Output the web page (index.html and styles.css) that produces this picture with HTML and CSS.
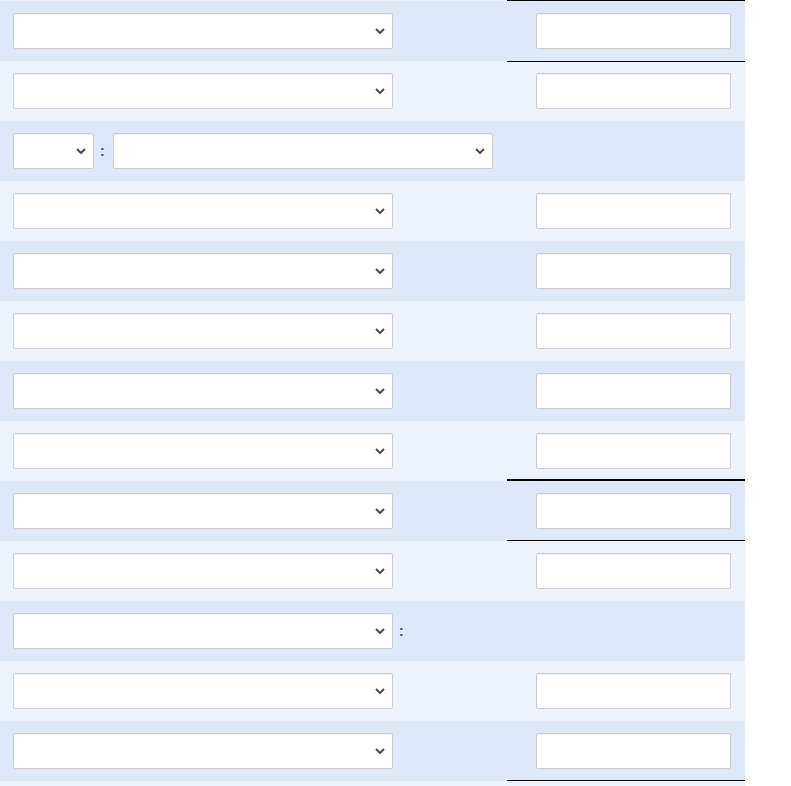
FILE: index.html
```html
<!DOCTYPE html>
<html lang="en">
<head>
<meta charset="utf-8">
<title>Form</title>
<link rel="stylesheet" href="styles.css">
</head>
<body>
<div class="sheet">
  <div class="row dark">
    <div class="c1"><span class="pick"><select class="sel"><option></option></select><svg class="chev" viewBox="0 0 10 6"><path d="M1 1L5 5L9 1"/></svg></span></div>
    <div class="c2"></div>
    <div class="c3 line-above"><input class="inp" type="text"></div>
  </div>
  <div class="row light">
    <div class="c1"><span class="pick"><select class="sel"><option></option></select><svg class="chev" viewBox="0 0 10 6"><path d="M1 1L5 5L9 1"/></svg></span></div>
    <div class="c2"></div>
    <div class="c3 line-top"><input class="inp" type="text"></div>
  </div>
  <div class="row dark">
    <div class="c12">
      <span class="pick"><select class="sel sel-small"><option></option></select><svg class="chev" viewBox="0 0 10 6"><path d="M1 1L5 5L9 1"/></svg></span>
      <span class="colon">:</span>
      <span class="pick"><select class="sel"><option></option></select><svg class="chev" viewBox="0 0 10 6"><path d="M1 1L5 5L9 1"/></svg></span>
    </div>
    <div class="c3"></div>
  </div>
  <div class="row light">
    <div class="c1"><span class="pick"><select class="sel"><option></option></select><svg class="chev" viewBox="0 0 10 6"><path d="M1 1L5 5L9 1"/></svg></span></div>
    <div class="c2"></div>
    <div class="c3"><input class="inp" type="text"></div>
  </div>
  <div class="row dark">
    <div class="c1"><span class="pick"><select class="sel"><option></option></select><svg class="chev" viewBox="0 0 10 6"><path d="M1 1L5 5L9 1"/></svg></span></div>
    <div class="c2"></div>
    <div class="c3"><input class="inp" type="text"></div>
  </div>
  <div class="row light">
    <div class="c1"><span class="pick"><select class="sel"><option></option></select><svg class="chev" viewBox="0 0 10 6"><path d="M1 1L5 5L9 1"/></svg></span></div>
    <div class="c2"></div>
    <div class="c3"><input class="inp" type="text"></div>
  </div>
  <div class="row dark">
    <div class="c1"><span class="pick"><select class="sel"><option></option></select><svg class="chev" viewBox="0 0 10 6"><path d="M1 1L5 5L9 1"/></svg></span></div>
    <div class="c2"></div>
    <div class="c3"><input class="inp" type="text"></div>
  </div>
  <div class="row light">
    <div class="c1"><span class="pick"><select class="sel"><option></option></select><svg class="chev" viewBox="0 0 10 6"><path d="M1 1L5 5L9 1"/></svg></span></div>
    <div class="c2"></div>
    <div class="c3 line-bottom-2"><input class="inp" type="text"></div>
  </div>
  <div class="row dark">
    <div class="c1"><span class="pick"><select class="sel"><option></option></select><svg class="chev" viewBox="0 0 10 6"><path d="M1 1L5 5L9 1"/></svg></span></div>
    <div class="c2"></div>
    <div class="c3 line-bottom"><input class="inp" type="text"></div>
  </div>
  <div class="row light">
    <div class="c1"><span class="pick"><select class="sel"><option></option></select><svg class="chev" viewBox="0 0 10 6"><path d="M1 1L5 5L9 1"/></svg></span></div>
    <div class="c2"></div>
    <div class="c3"><input class="inp" type="text"></div>
  </div>
  <div class="row dark">
    <div class="c1 with-colon">
      <span class="pick"><select class="sel"><option></option></select><svg class="chev" viewBox="0 0 10 6"><path d="M1 1L5 5L9 1"/></svg></span>
      <span class="colon colon-after">:</span>
    </div>
    <div class="c2"></div>
    <div class="c3"></div>
  </div>
  <div class="row light">
    <div class="c1"><span class="pick"><select class="sel"><option></option></select><svg class="chev" viewBox="0 0 10 6"><path d="M1 1L5 5L9 1"/></svg></span></div>
    <div class="c2"></div>
    <div class="c3"><input class="inp" type="text"></div>
  </div>
  <div class="row dark">
    <div class="c1"><span class="pick"><select class="sel"><option></option></select><svg class="chev" viewBox="0 0 10 6"><path d="M1 1L5 5L9 1"/></svg></span></div>
    <div class="c2"></div>
    <div class="c3 line-bottom"><input class="inp" type="text"></div>
  </div>
  <div class="row light tail"></div>
</div>
</body>
</html>
```

FILE: styles.css
```css
html, body {
  margin: 0;
  padding: 0;
  background: #ffffff;
}

body {
  font-family: "Liberation Sans", Arial, sans-serif;
  font-size: 13px;
}

.sheet {
  width: 745px;
  padding-top: 1px;
  background: #ecf3fe;
}

.row {
  display: flex;
  height: 60px;
}

.row.dark {
  background: #dde8f8;
}

.row.light {
  background: #ecf3fe;
}

.row.tail {
  height: 10px;
}

.c1 {
  width: 400px;
  flex: none;
  display: flex;
  align-items: center;
  padding-left: 13px;
  box-sizing: border-box;
}

.c2 {
  width: 107px;
  flex: none;
}

.c12 {
  width: 507px;
  flex: none;
  display: flex;
  align-items: center;
  padding-left: 13px;
  box-sizing: border-box;
}

.c3 {
  width: 238px;
  flex: none;
  display: flex;
  align-items: center;
  padding-left: 29px;
  box-sizing: border-box;
}

.line-above {
  box-shadow: 0 -1px 0 #000000;
}

.line-top {
  box-shadow: inset 0 1px 0 #000000;
}

.line-bottom {
  box-shadow: inset 0 -1px 0 #000000;
}

.line-bottom-2 {
  box-shadow: inset 0 -2px 0 #000000;
}

.pick {
  position: relative;
  display: inline-flex;
  flex: none;
}

.sel {
  -webkit-appearance: none;
  appearance: none;
  width: 380px;
  height: 36px;
  flex: none;
  box-sizing: border-box;
  margin: 0;
  background-color: #ffffff;
  border: 1px solid #cccccc;
  border-radius: 2px;
  box-shadow: inset 0 1px 1px rgba(0, 0, 0, 0.06);
  font-family: "Liberation Sans", Arial, sans-serif;
  font-size: 13px;
  color: #333333;
  padding: 0 24px 0 6px;
}

.sel-small {
  width: 81px;
}

.chev {
  position: absolute;
  right: 8px;
  top: 15px;
  width: 10px;
  height: 6px;
  fill: none;
  stroke: #4a4a4a;
  stroke-width: 2;
  stroke-linecap: butt;
  stroke-linejoin: miter;
  pointer-events: none;
}

.colon {
  color: #1f4a85;
  font-size: 14px;
  font-weight: bold;
  line-height: 1;
  margin: 0 8px 0 6px;
}

.colon-after {
  margin: 0 0 0 6px;
}

.inp {
  width: 195px;
  height: 36px;
  box-sizing: border-box;
  margin: 0;
  background: #ffffff;
  border: 1px solid #cccccc;
  border-radius: 2px;
  box-shadow: inset 0 1px 1px rgba(0, 0, 0, 0.06);
  padding: 0 6px;
  font-family: "Liberation Sans", Arial, sans-serif;
  font-size: 13px;
}
```
